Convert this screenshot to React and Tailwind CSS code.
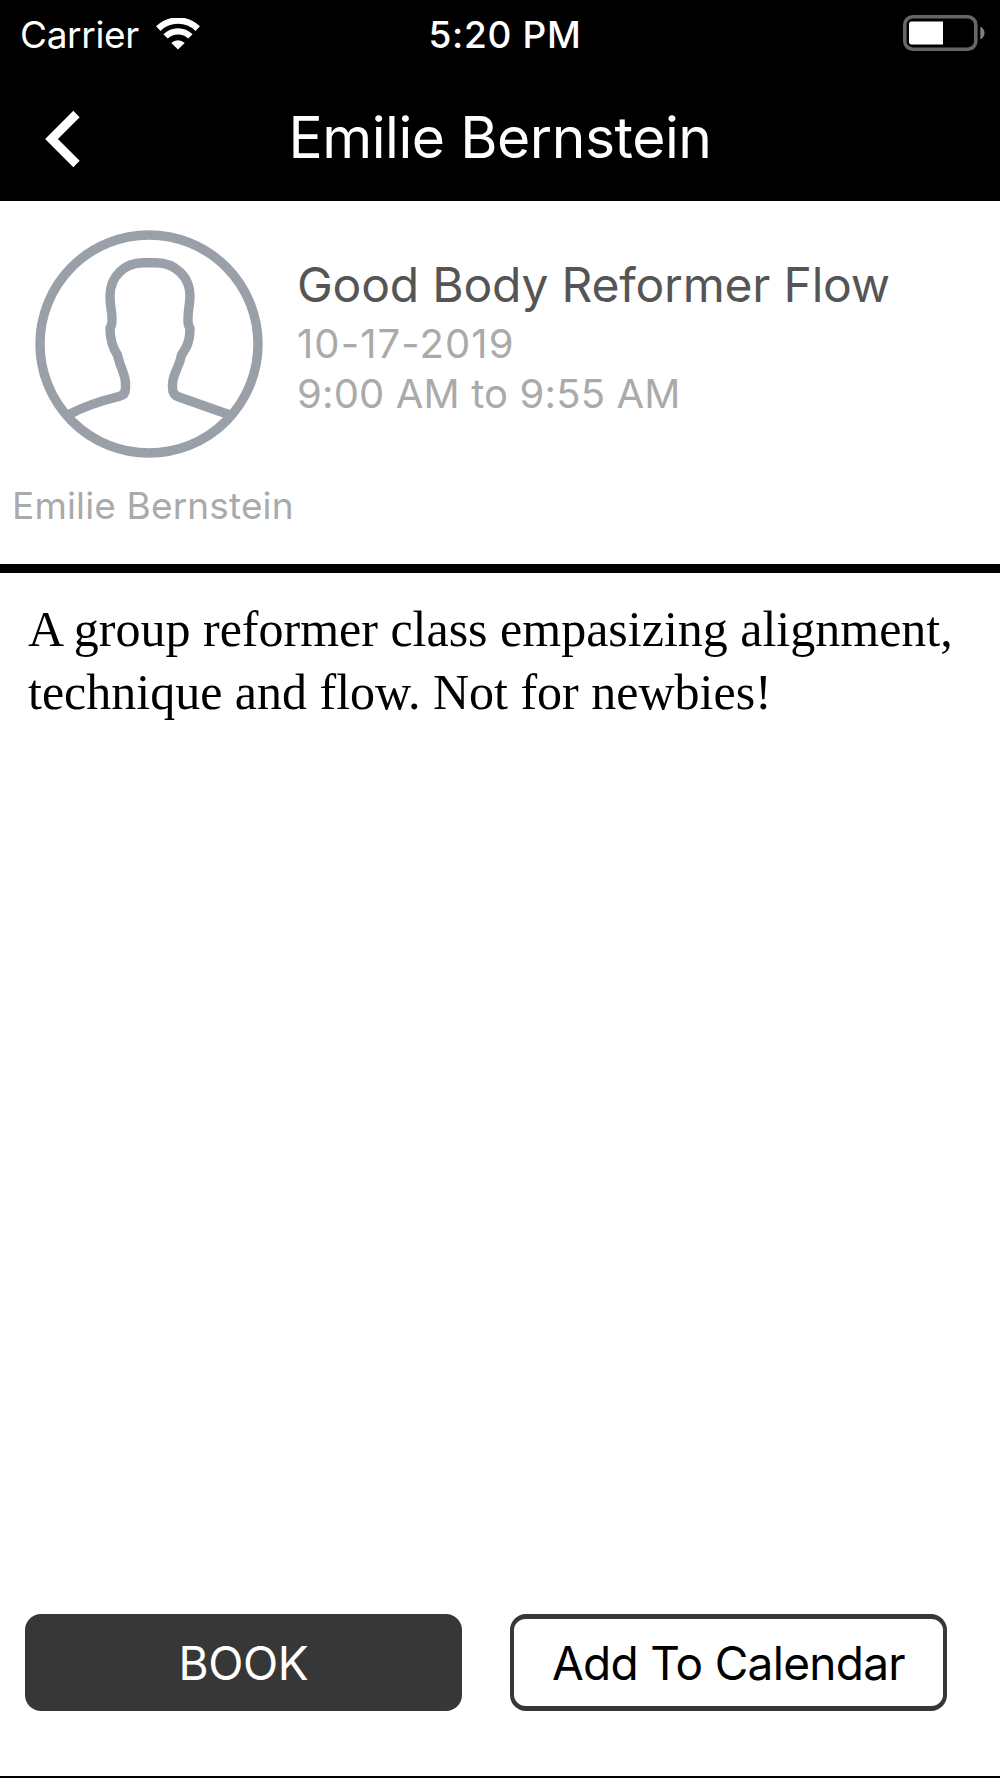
import { clsx } from 'clsx';

const session = {
  instructor: 'Emilie Bernstein',
  title: 'Good Body Reformer Flow',
  date: '10-17-2019',
  time: '9:00 AM to 9:55 AM',
  description: ['A group reformer class empasizing alignment,', 'technique and flow. Not for newbies!'],
};

const WifiIcon = () => (
  <svg className="w-[44px] h-[32px]" viewBox="0 0 44 32" fill="none" stroke="#fff">
    <path d="M2.3 10.6 A28.2 28.2 0 0 1 41.7 10.6" strokeWidth="6.4" />
    <path d="M9.6 18.4 A17.6 17.6 0 0 1 34.4 18.4" strokeWidth="6.2" />
    <path d="M22 31.6 L15.3 24.9 A9.6 9.6 0 0 1 28.7 24.9 Z" fill="#fff" stroke="none" />
  </svg>
);

const BatteryIcon = () => (
  <svg className="w-[84px] h-[37px]" viewBox="0 0 84 37" fill="none">
    <rect x="2.8" y="2.8" width="71" height="32.4" rx="8" stroke="#666" strokeWidth="3.6" />
    <path d="M9.5 7.5H41v23H9.5a2.5 2.5 0 0 1-2.5-2.5v-18a2.5 2.5 0 0 1 2.5-2.5z" fill="#fff" />
    <path d="M78.3 12.5c5.6 2.6 5.6 10.4 0 13z" fill="#808080" />
  </svg>
);

const Avatar = () => (
  <svg className="w-[228px] h-[228px]" viewBox="0 0 228 228" fill="none" stroke="#9aa0a8" strokeWidth="9.4">
    <circle cx="114" cy="114" r="109" />
    <path
      d="M33 185 C46 178 65 171 84 166.5 Q90.5 165 90.5 159 V153 C90.5 148 87 139 85 134 C84 130 83 128 82.5 125 C77 117 75 110 75 98 C77.5 95 77.3 88 76.5 82 C75.5 76 75 72 75 66 C75 46 90 32.7 108 32.7 H121 C140 32.7 155 47 155 66 C155 74 153 80 153 88 C153 94 153 95 155 98 C155 111 152 117 146.5 125 C145.5 129 145 132 143 136 C140.5 143 137.5 147 137.5 155 V158 Q137.5 165 144 167 L195 185"
      strokeLinejoin="round"
    />
  </svg>
);

const StatusBar = () => (
  <div className="h-[68px] grid grid-cols-3 items-center pl-[20px] pr-[14px] text-[37px] leading-none">
    <div className="flex items-center gap-[17px]">
      <span className="tracking-[-0.35px]">Carrier</span>
      <WifiIcon />
    </div>
    <span className="text-center font-medium tracking-[0.7px] pl-[4px]">5:20 PM</span>
    <div className="flex justify-end pb-[3px]">
      <BatteryIcon />
    </div>
  </div>
);

const NavBar = ({ title }) => (
  <div className="h-[133px] grid grid-cols-[200px_1fr_200px] items-center pt-[5px]">
    <button className="pl-[44px] pt-[3px]" aria-label="Back">
      <svg className="w-[38px] h-[58px]" viewBox="0 0 38 58" fill="none" stroke="#fff" strokeWidth="9">
        <path d="M32.5 4 L7.5 29 L32.5 54" />
      </svg>
    </button>
    <h1 className="text-center text-[57px] leading-none tracking-[-0.45px] whitespace-nowrap">{title}</h1>
  </div>
);

const ActionButton = ({ primary, children }) => (
  <button
    className={clsx(
      'w-[437px] h-[97px] rounded-[16px] border-[#373737] pt-[1px] text-[46px] leading-none',
      primary ? 'bg-[#373737] text-white tracking-[-0.4px]' : 'border-x-4 border-y-5 bg-white text-black tracking-[-0.7px]'
    )}
  >
    {children}
  </button>
);

const App = () => {
  return (
    <div className="w-[1000px] h-[1778px] flex flex-col bg-white border-b-2 border-black font-['Inter',sans-serif] overflow-hidden">
      <header className="bg-black text-white">
        <StatusBar />
        <NavBar title={session.instructor} />
      </header>

      <section className="h-[372px] border-b-[9px] border-black pt-[29px]">
        <div className="flex pl-[35px]">
          <Avatar />
          <div className="pl-[34px] pt-[30px] text-[40px] leading-[50px] text-[#aaaaaa] whitespace-nowrap">
            <h2 className="text-[48px] text-[#555555] tracking-[-0.2px] pb-[9px]">{session.title}</h2>
            <p className="tracking-[1.1px]">{session.date}</p>
            <p className="tracking-[0.15px]">{session.time}</p>
          </div>
        </div>
        <p className="pl-[12px] pt-[27px] text-[37px] leading-[42px] tracking-[0.15px] text-[#aaaaaa]">
          {session.instructor}
        </p>
      </section>

      <main className="flex-1 pl-[28px] pt-[25px] font-['Liberation_Serif',serif] text-[50px] leading-[63px] text-black whitespace-nowrap">
        {session.description.map((line) => (
          <p key={line}>{line}</p>
        ))}
      </main>

      <footer className="flex gap-[48px] pl-[25px] pb-[65px]">
        <ActionButton primary>BOOK</ActionButton>
        <ActionButton>Add To Calendar</ActionButton>
      </footer>
    </div>
  );
};

export default App;
